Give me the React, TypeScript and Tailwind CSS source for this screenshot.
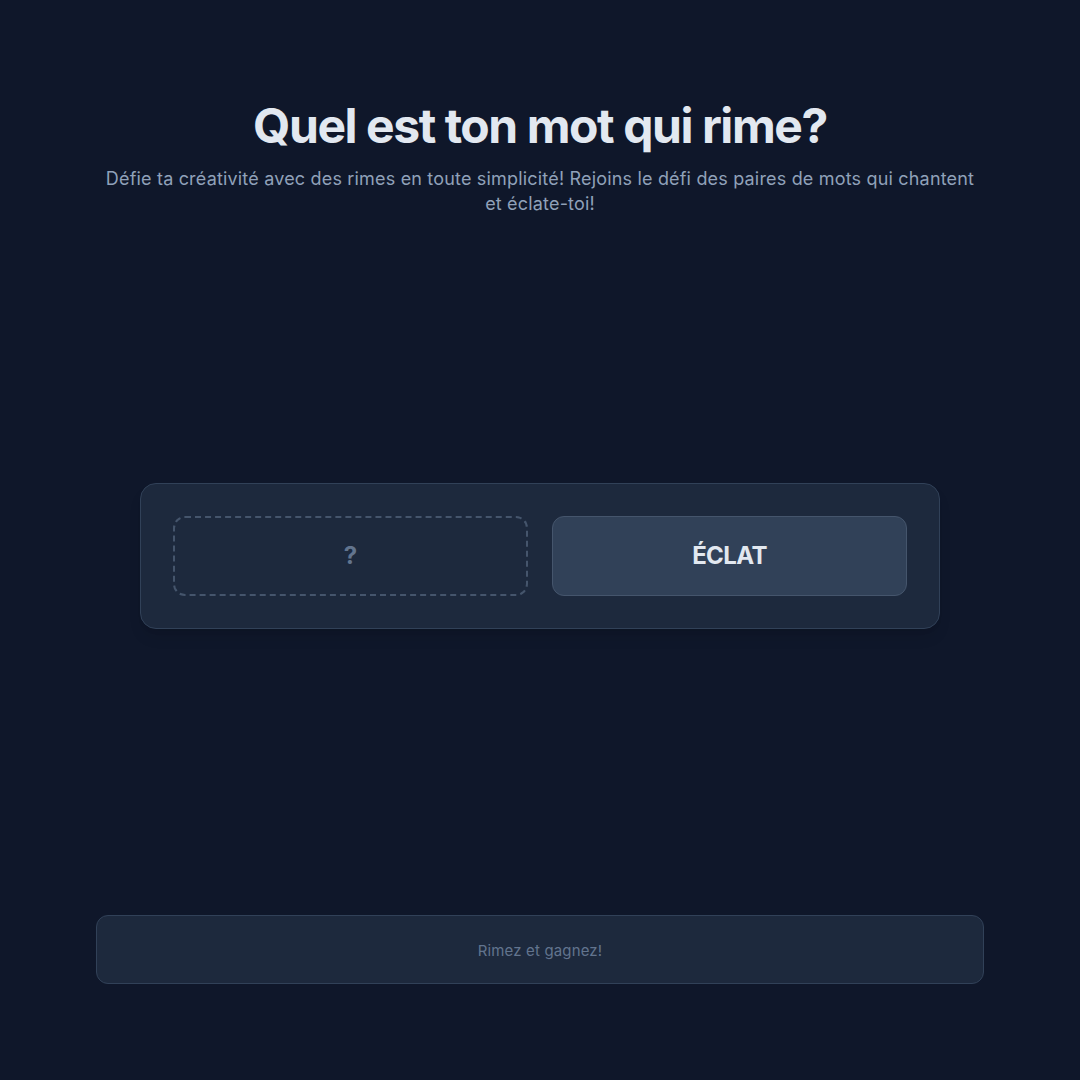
export default function App() {
  return (
    <div
      className="flex min-h-screen flex-col bg-[#0f172a] pb-24 pt-[98px] text-slate-200"
      style={{ fontFamily: "Inter, 'Noto Sans', sans-serif" }}
    >
      <header className="mx-auto w-[880px] text-center">
        <h1 className="text-5xl font-bold leading-[56px] tracking-[-0.03em] text-slate-200">Quel est ton mot qui rime?</h1>
        <p className="mt-3 text-lg leading-[25px] tracking-[0.01em] text-slate-400">
          Défie ta créativité avec des rimes en toute simplicité! Rejoins le défi des paires de mots qui chantent et éclate-toi!
        </p>
      </header>

      <main className="flex flex-1 items-center justify-center pb-[20px]">
        <div className="w-[800px] rounded-2xl border border-slate-700 bg-slate-800 p-8 shadow-lg">
          <div className="grid grid-cols-2 gap-6">
            <div className="flex h-20 items-center justify-center rounded-xl border-2 border-dashed border-slate-600 text-2xl font-bold text-slate-500">
              ?
            </div>
            <button
              type="button"
              className="flex h-20 items-center justify-center rounded-xl border border-slate-600 bg-slate-700 text-2xl font-bold tracking-tight text-slate-200"
            >
              ÉCLAT
            </button>
          </div>
        </div>
      </main>

      <footer className="mx-auto flex h-[69px] w-[888px] items-center justify-center rounded-xl border border-slate-700 bg-slate-800 pt-[4px] text-[15px] tracking-[0.01em] text-slate-500">
        Rimez et gagnez!
      </footer>
    </div>
  );
}
